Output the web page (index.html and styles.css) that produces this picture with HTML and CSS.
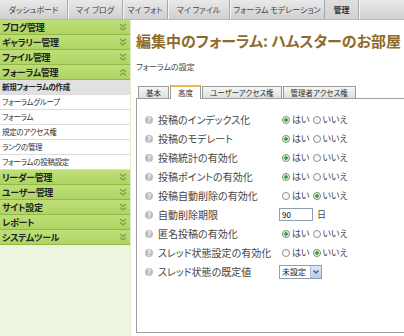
FILE: index.html
```html
<!DOCTYPE html>
<html>
<head>
  <meta charset="utf-8">
  <title>フォーラム管理</title>
  <link rel="stylesheet" href="styles.css">
</head>
<body>
  <div class="topnav">
    <a class="nav-item" style="width:68px">ダッシュボード</a>
    <a class="nav-item" style="width:55px">マイ ブログ</a>
    <a class="nav-item" style="width:45px">マイ フォト</a>
    <a class="nav-item" style="width:62px">マイ ファイル</a>
    <a class="nav-item" style="width:95px">フォーラム モデレーション</a>
    <a class="nav-item active" style="width:34px">管理</a>
  </div>

  <div class="layout">
    <div class="sidebar">
      <div class="side-head">ブログ管理<svg class="chev" viewBox="0 0 8 8"><path d="M1 1l3 2.5L7 1M1 4.5L4 7l3-2.5"/></svg></div>
      <div class="side-head">ギャラリー管理<svg class="chev" viewBox="0 0 8 8"><path d="M1 1l3 2.5L7 1M1 4.5L4 7l3-2.5"/></svg></div>
      <div class="side-head">ファイル管理<svg class="chev" viewBox="0 0 8 8"><path d="M1 1l3 2.5L7 1M1 4.5L4 7l3-2.5"/></svg></div>
      <div class="side-head">フォーラム管理<svg class="chev" viewBox="0 0 8 8"><path d="M1 4l3-2.5L7 4M1 7.5L4 5l3 2.5"/></svg></div>
      <div class="side-item current">新規フォーラムの作成</div>
      <div class="side-item">フォーラムグループ</div>
      <div class="side-item">フォーラム</div>
      <div class="side-item">規定のアクセス権</div>
      <div class="side-item">ランクの管理</div>
      <div class="side-item">フォーラムの投稿設定</div>
      <div class="side-head">リーダー管理<svg class="chev" viewBox="0 0 8 8"><path d="M1 1l3 2.5L7 1M1 4.5L4 7l3-2.5"/></svg></div>
      <div class="side-head">ユーザー管理<svg class="chev" viewBox="0 0 8 8"><path d="M1 1l3 2.5L7 1M1 4.5L4 7l3-2.5"/></svg></div>
      <div class="side-head">サイト設定<svg class="chev" viewBox="0 0 8 8"><path d="M1 1l3 2.5L7 1M1 4.5L4 7l3-2.5"/></svg></div>
      <div class="side-head">レポート<svg class="chev" viewBox="0 0 8 8"><path d="M1 1l3 2.5L7 1M1 4.5L4 7l3-2.5"/></svg></div>
      <div class="side-head">システムツール<svg class="chev" viewBox="0 0 8 8"><path d="M1 1l3 2.5L7 1M1 4.5L4 7l3-2.5"/></svg></div>
    </div>

    <div class="main">
      <h1 class="page-title">編集中のフォーラム: ハムスターのお部屋</h1>
      <div class="subtitle">フォーラムの設定</div>

      <div class="tabs">
        <span class="tab">基本</span>
        <span class="tab active">高度</span>
        <span class="tab">ユーザーアクセス権</span>
        <span class="tab">管理者アクセス権</span>
      </div>

      <div class="panel">
        <div class="row">
          <span class="label"><i class="help">?</i>投稿のインデックス化</span>
          <span class="field"><input type="radio" name="r1" checked>はい <input type="radio" name="r1">いいえ</span>
        </div>
        <div class="row">
          <span class="label"><i class="help">?</i>投稿のモデレート</span>
          <span class="field"><input type="radio" name="r2" checked>はい <input type="radio" name="r2">いいえ</span>
        </div>
        <div class="row">
          <span class="label"><i class="help">?</i>投稿統計の有効化</span>
          <span class="field"><input type="radio" name="r3" checked>はい <input type="radio" name="r3">いいえ</span>
        </div>
        <div class="row">
          <span class="label"><i class="help">?</i>投稿ポイントの有効化</span>
          <span class="field"><input type="radio" name="r4" checked>はい <input type="radio" name="r4">いいえ</span>
        </div>
        <div class="row">
          <span class="label"><i class="help">?</i>投稿自動削除の有効化</span>
          <span class="field"><input type="radio" name="r5">はい <input type="radio" name="r5" checked>いいえ</span>
        </div>
        <div class="row">
          <span class="label"><i class="help">?</i>自動削除期限</span>
          <span class="field"><input type="text" class="num" value="90"> 日</span>
        </div>
        <div class="row">
          <span class="label"><i class="help">?</i>匿名投稿の有効化</span>
          <span class="field"><input type="radio" name="r6" checked>はい <input type="radio" name="r6">いいえ</span>
        </div>
        <div class="row">
          <span class="label"><i class="help">?</i>スレッド状態設定の有効化</span>
          <span class="field"><input type="radio" name="r7">はい <input type="radio" name="r7" checked>いいえ</span>
        </div>
        <div class="row">
          <span class="label"><i class="help">?</i>スレッド状態の既定値</span>
          <span class="field"><span class="select"><select><option>未設定</option></select><span class="select-btn"><svg viewBox="0 0 8 8"><path d="M1.5 2.5L4 5l2.5-2.5"/></svg></span></span></span>
        </div>
      </div>
    </div>
  </div>
</body>
</html>
```

FILE: styles.css
```css
body {
  margin: 0;
  font-family: "Noto Sans CJK JP", sans-serif;
  font-feature-settings: "palt";
  color: #333;
  background: #fff;
  overflow: hidden;
}

.topnav {
  display: flex;
  height: 20px;
  background: linear-gradient(#e9e9e9, #cfcfcf);
  border-bottom: 1px solid #b9b9b9;
  box-sizing: border-box;
}

.nav-item {
  display: flex;
  align-items: center;
  justify-content: center;
  font-size: 8px;
  color: #444;
  border-right: 1px solid #a9a9a9;
  box-shadow: 1px 0 0 #f4f4f4;
  box-sizing: border-box;
  white-space: nowrap;
}

.nav-item.active {
  background: linear-gradient(#dedede, #d2d2d2);
  color: #333;
  font-weight: bold;
}

.layout {
  display: flex;
}

.sidebar {
  width: 130px;
  height: 316px;
  background: #eef5df;
  border-right: 1px solid #e2ecd0;
  flex-shrink: 0;
}

.side-head {
  display: flex;
  justify-content: space-between;
  align-items: center;
  height: 14px;
  padding: 0 3px 0 2px;
  background: linear-gradient(#bedf78, #b0d463);
  border-bottom: 1px solid #93b84a;
  font-size: 9px;
  letter-spacing: -0.3px;
  font-weight: bold;
  color: #222;
}

.chev {
  width: 8px;
  height: 8px;
  fill: none;
  stroke: #7e9c52;
  stroke-width: 1.3;
}

.side-item {
  height: 14px;
  line-height: 14px;
  padding-left: 2px;
  background: #fff;
  border-bottom: 1px solid #dcdcdc;
  font-size: 7.5px;
  letter-spacing: -0.3px;
  color: #333;
}

.side-item.current {
  background: #e1e1e1;
  font-weight: bold;
  color: #222;
}

.main {
  flex: 1;
  padding: 11px 0 0 5px;
  min-width: 0;
  overflow: hidden;
}

.page-title {
  margin: 0;
  font-size: 15px;
  line-height: 20px;
  font-weight: bold;
  color: #8d6b2a;
  white-space: nowrap;
}

.subtitle {
  margin-top: 10px;
  font-size: 8px;
  color: #444;
}

.tabs {
  display: flex;
  align-items: flex-end;
  margin-top: 14px;
  padding-left: 2px;
  height: 12px;
}

.tab {
  height: 11px;
  line-height: 11px;
  padding: 0 7px;
  margin-right: 1px;
  font-size: 7.5px;
  color: #333;
  background: linear-gradient(#f7f7f7, #dedede);
  border: 1px solid #9a9a9a;
  border-bottom: none;
}

.tab.active {
  height: 12px;
  background: #fff;
  border-top: 2px solid #f0b54a;
  margin-bottom: -1px;
  position: relative;
}

.panel {
  width: 300px;
  height: 235px;
  border: 1px solid #9f9f9f;
  padding-top: 11px;
  box-sizing: border-box;
}

.row {
  display: flex;
  align-items: center;
  height: 19px;
}

.label {
  display: flex;
  align-items: center;
  width: 142px;
  padding-left: 8px;
  box-sizing: border-box;
  font-size: 10px;
  color: #444;
  white-space: nowrap;
}

.help {
  display: inline-flex;
  align-items: center;
  justify-content: center;
  width: 8px;
  height: 8px;
  margin-right: 5px;
  border-radius: 50%;
  background: #bdbdbd;
  color: #fff;
  font-size: 7px;
  font-style: normal;
  font-weight: bold;
}

.field {
  display: flex;
  align-items: center;
  font-size: 9px;
  color: #444;
}

.field input[type="radio"] {
  appearance: none;
  width: 8px;
  height: 8px;
  margin: 0 2px 0 3px;
  border: 1px solid #8e8e8e;
  border-radius: 50%;
  background: linear-gradient(#f4f4f4, #fff);
}

.field input[type="radio"]:checked {
  background: radial-gradient(#3c9a44 35%, #cfe8cf 45%, #fff 70%);
  border-color: #6a8f6c;
}

.num {
  width: 28px;
  height: 11px;
  padding: 0 2px;
  margin: 0 4px 0 0;
  border: 1px solid #8e9eb3;
  font: 8px "Noto Sans CJK JP", sans-serif;
  box-sizing: content-box;
}

.select {
  display: inline-flex;
  align-items: stretch;
  height: 12px;
  border: 1px solid #8e9eb3;
}

.select select {
  appearance: none;
  border: none;
  padding: 0 2px;
  font: 8px "Noto Sans CJK JP", sans-serif;
  color: #222;
  background: #fff;
  width: 30px;
}

.select-btn {
  display: flex;
  align-items: center;
  justify-content: center;
  width: 10px;
  background: linear-gradient(#dfe8f7, #b9cbeb);
  border-left: 1px solid #a7b9da;
}

.select-btn svg {
  width: 8px;
  height: 8px;
  fill: none;
  stroke: #3d5d9a;
  stroke-width: 1.4;
}
```
